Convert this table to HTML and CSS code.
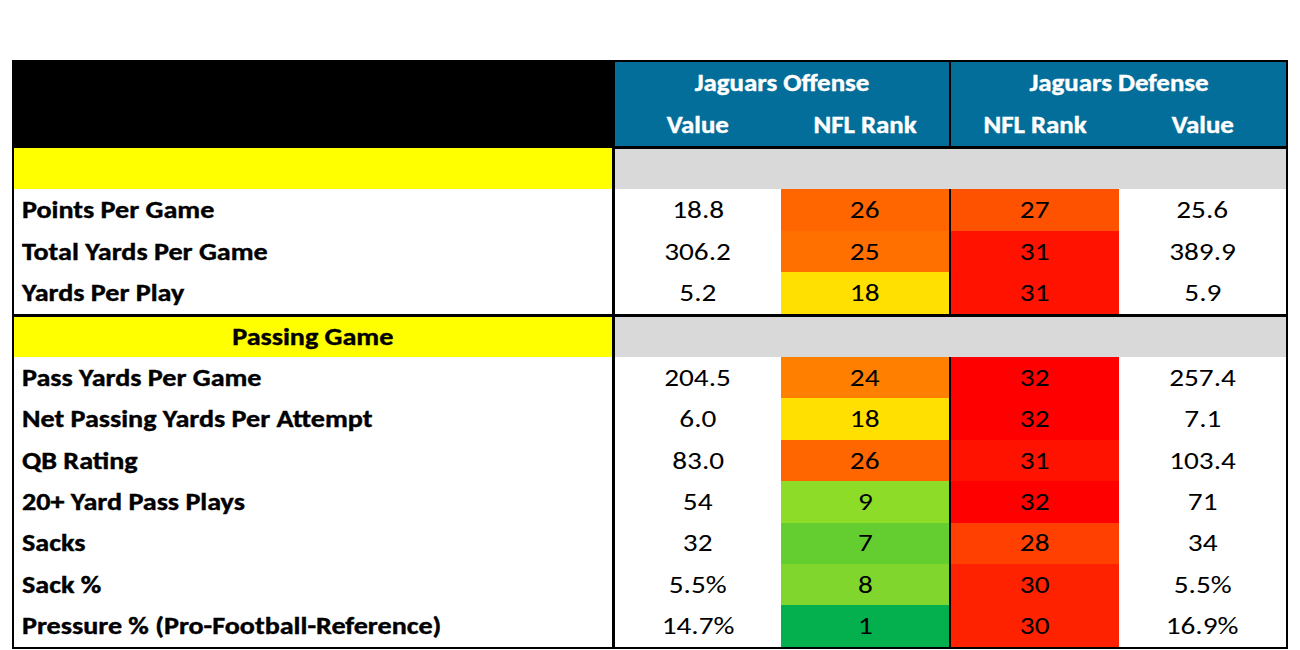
FILE: index.html
```html
<!DOCTYPE html>
<html>
<head>
<meta charset="utf-8">
<link rel="stylesheet" href="styles.css">
</head>
<body>
<table class="stats">
  <colgroup>
    <col class="c-label">
    <col class="c-val">
    <col class="c-rank">
    <col class="c-rank">
    <col class="c-val">
  </colgroup>
  <thead>
    <tr class="h1">
      <th class="corner" rowspan="2"></th>
      <th class="blue" colspan="2"><span class="t">Jaguars Offense</span></th>
      <th class="blue split" colspan="2"><span class="t">Jaguars Defense</span></th>
    </tr>
    <tr class="h2">
      <th class="blue"><span class="t">Value</span></th>
      <th class="blue"><span class="t">NFL Rank</span></th>
      <th class="blue split"><span class="t">NFL Rank</span></th>
      <th class="blue"><span class="t">Value</span></th>
    </tr>
  </thead>
  <tbody>
    <tr class="section">
      <td class="sec-label"></td>
      <td class="sec-gray" colspan="4"></td>
    </tr>
    <tr class="row">
      <td class="label"><span class="t tl">Points Per Game</span></td>
      <td class="num"><span class="t">18.8</span></td>
      <td class="num" style="background:#ff6600"><span class="t">26</span></td>
      <td class="num split" style="background:#ff5200"><span class="t">27</span></td>
      <td class="num"><span class="t">25.6</span></td>
    </tr>
    <tr class="row">
      <td class="label"><span class="t tl">Total Yards Per Game</span></td>
      <td class="num"><span class="t">306.2</span></td>
      <td class="num" style="background:#ff7000"><span class="t">25</span></td>
      <td class="num split" style="background:#ff1200"><span class="t">31</span></td>
      <td class="num"><span class="t">389.9</span></td>
    </tr>
    <tr class="row last">
      <td class="label"><span class="t tl">Yards Per Play</span></td>
      <td class="num"><span class="t">5.2</span></td>
      <td class="num" style="background:#ffe000"><span class="t">18</span></td>
      <td class="num split" style="background:#ff1200"><span class="t">31</span></td>
      <td class="num"><span class="t">5.9</span></td>
    </tr>
    <tr class="section">
      <td class="sec-label"><span class="t">Passing Game</span></td>
      <td class="sec-gray" colspan="4"></td>
    </tr>
    <tr class="row row-b">
      <td class="label"><span class="t tl">Pass Yards Per Game</span></td>
      <td class="num"><span class="t">204.5</span></td>
      <td class="num" style="background:#ff8000"><span class="t">24</span></td>
      <td class="num split" style="background:#ff0000"><span class="t">32</span></td>
      <td class="num"><span class="t">257.4</span></td>
    </tr>
    <tr class="row row-b">
      <td class="label"><span class="t tl">Net Passing Yards Per Attempt</span></td>
      <td class="num"><span class="t">6.0</span></td>
      <td class="num" style="background:#ffe000"><span class="t">18</span></td>
      <td class="num split" style="background:#ff0000"><span class="t">32</span></td>
      <td class="num"><span class="t">7.1</span></td>
    </tr>
    <tr class="row row-b">
      <td class="label"><span class="t tl">QB Rating</span></td>
      <td class="num"><span class="t">83.0</span></td>
      <td class="num" style="background:#ff6600"><span class="t">26</span></td>
      <td class="num split" style="background:#ff1200"><span class="t">31</span></td>
      <td class="num"><span class="t">103.4</span></td>
    </tr>
    <tr class="row row-b">
      <td class="label"><span class="t tl">20+ Yard Pass Plays</span></td>
      <td class="num"><span class="t">54</span></td>
      <td class="num" style="background:#8cdc28"><span class="t">9</span></td>
      <td class="num split" style="background:#ff0000"><span class="t">32</span></td>
      <td class="num"><span class="t">71</span></td>
    </tr>
    <tr class="row row-b">
      <td class="label"><span class="t tl">Sacks</span></td>
      <td class="num"><span class="t">32</span></td>
      <td class="num" style="background:#64ce30"><span class="t">7</span></td>
      <td class="num split" style="background:#ff4000"><span class="t">28</span></td>
      <td class="num"><span class="t">34</span></td>
    </tr>
    <tr class="row row-b">
      <td class="label"><span class="t tl">Sack %</span></td>
      <td class="num"><span class="t">5.5%</span></td>
      <td class="num" style="background:#80d62c"><span class="t">8</span></td>
      <td class="num split" style="background:#ff2200"><span class="t">30</span></td>
      <td class="num"><span class="t">5.5%</span></td>
    </tr>
    <tr class="row row-b">
      <td class="label"><span class="t tl">Pressure % (Pro-Football-Reference)</span></td>
      <td class="num"><span class="t">14.7%</span></td>
      <td class="num" style="background:#04b04e"><span class="t">1</span></td>
      <td class="num split" style="background:#ff2200"><span class="t">30</span></td>
      <td class="num"><span class="t">16.9%</span></td>
    </tr>
  </tbody>
</table>
</body>
</html>
```

FILE: styles.css
```css
html, body {
  margin: 0;
  padding: 0;
  background: #ffffff;
}

body {
  padding: 60px 0 0 12px;
  font-family: "Carlito", "Lato", "Liberation Sans", sans-serif;
  color: #000;
}

.stats {
  border-collapse: collapse;
  table-layout: fixed;
  width: 1275px;
  border: 2px solid #000;
}

.c-label { width: 600px; }
.c-val { width: 168px; }
.c-rank { width: 169px; }

.stats th,
.stats td {
  padding: 0;
  font-size: 24px;
  line-height: 28px;
}

/* Calibri-like wide rendering of the source sheet */
.t {
  display: inline-block;
  transform: scaleX(1.17);
  transform-origin: 50% 50%;
  white-space: nowrap;
}

.tl {
  transform-origin: 0 50%;
}

.corner {
  background: #000;
  border-right: 3px solid #000;
}

.blue {
  background: #036e9a;
  color: #fff;
  font-weight: 700;
  text-align: center;
  height: 42px;
  -webkit-text-stroke: 0.4px #fff;
}

.blue .t {
  transform: scaleX(1.12);
}

.h1 .blue { border-top: 2px solid #000; }
.h2 .blue { border-bottom: 3px solid #000; }

.split {
  border-left: 2px solid #000;
}

.section td {
  height: 40px;
}

.sec-label {
  background: #ffff00;
  font-weight: 700;
  text-align: center;
  border-right: 3px solid #000;
  -webkit-text-stroke: 0.4px #000;
}

.sec-gray {
  background: #d9d9d9;
}

.row td {
  height: 41.7px;
}

.row-b td {
  height: 41.4px;
}

.label {
  font-weight: 700;
  padding-left: 8px !important;
  border-right: 3px solid #000;
  -webkit-text-stroke: 0.4px #000;
}

.stats td.num {
  text-align: center;
  font-weight: 400;
  font-size: 25px;
}

.last td {
  border-bottom: 3px solid #000;
}
```
